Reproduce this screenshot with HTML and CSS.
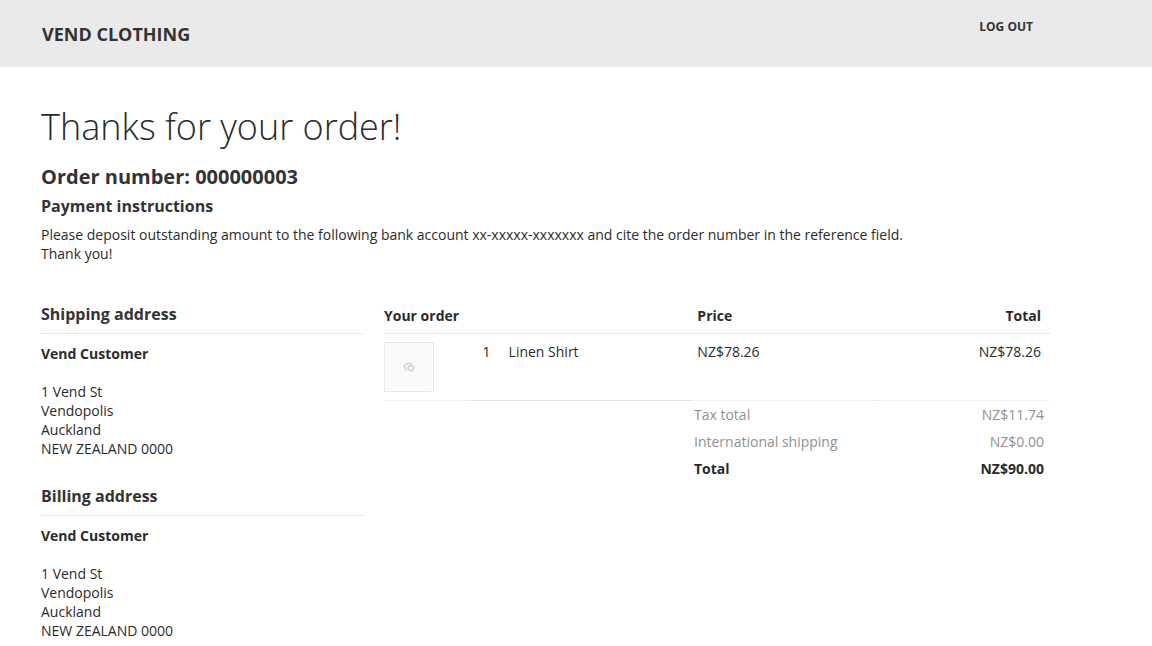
FILE: index.html
```html
<!DOCTYPE html>
<html lang="en">
<head>
<meta charset="utf-8">
<title>Vend Clothing</title>
<link rel="stylesheet" href="styles.css">
</head>
<body>
<header class="site-header">
  <div class="container header-row">
    <a class="brand" href="#">VEND CLOTHING</a>
    <a class="logout" href="#">LOG OUT</a>
  </div>
</header>
<main class="container">
  <h1 class="title">Thanks for your order!</h1>
  <h2 class="order-number">Order number: 000000003</h2>
  <h3 class="instructions-title">Payment instructions</h3>
  <p class="instructions">Please deposit outstanding amount to the following bank account xx-xxxxx-xxxxxxx and cite the order number in the reference field.<br>Thank you!</p>
  <div class="columns">
    <div class="addresses">
      <section class="address">
        <h3 class="address-title">Shipping address</h3>
        <p class="customer">Vend Customer</p>
        <address class="lines">1 Vend St<br>Vendopolis<br>Auckland<br>NEW ZEALAND 0000</address>
      </section>
      <section class="address">
        <h3 class="address-title">Billing address</h3>
        <p class="customer">Vend Customer</p>
        <address class="lines">1 Vend St<br>Vendopolis<br>Auckland<br>NEW ZEALAND 0000</address>
      </section>
    </div>
    <section class="order">
      <table class="items">
        <colgroup><col class="col-thumb"><col class="col-name"><col class="col-price"><col class="col-total"></colgroup>
        <thead>
          <tr><th colspan="2">Your order</th><th class="price">Price</th><th class="amount">Total</th></tr>
        </thead>
        <tbody>
          <tr>
            <td>
              <div class="thumb">
                <svg width="48" height="48" viewBox="0 0 48 48" fill="none" stroke-linejoin="round">
                  <path d="M0 0 48 48M48 0 0 48" stroke="#f7f7f7"/>
                  <path d="M22 27 20.500 26.500 19 23 21.500 21 25.500 20.200 26.500 22" stroke="#d2d2d2" stroke-width="1.500"/>
                  <path d="M24.500 22.800 28.800 23.300 28 27.500 25 27.500 22.500 25Z" fill="#fafafa" stroke="#d2d2d2" stroke-width="1.500"/>
                </svg>
              </div>
            </td>
            <td class="name"><span class="quantity">1</span>Linen Shirt</td>
            <td class="price">NZ$78.26</td>
            <td class="amount">NZ$78.26</td>
          </tr>
        </tbody>
      </table>
      <table class="totals">
        <tbody>
          <tr><th>Tax total</th><td>NZ$11.74</td></tr>
          <tr><th>International shipping</th><td>NZ$0.00</td></tr>
          <tr class="grand"><th>Total</th><td>NZ$90.00</td></tr>
        </tbody>
      </table>
    </section>
  </div>
</main>
</body>
</html>
```
FILE: styles.css
```css
* { box-sizing: border-box; }
body {
  margin: 0;
  background: #fff;
  color: #2b2b2b;
  font: 14px/19px "Open Sans", sans-serif;
}
h1, h2, h3, p { margin: 0; }
h2, h3 { color: #333; }
a { color: inherit; text-decoration: none; }
.container {
  max-width: 1050px;
  padding-left: 41px;
}
.site-header {
  background: #eaeaea;
  padding: 16px 0 15px;
}
.header-row {
  display: flex;
  justify-content: space-between;
  padding-left: 42px;
  padding-right: 17px;
  color: #333;
}
.brand {
  font-size: 18px;
  line-height: 36px;
  font-weight: 700;
}
.logout {
  font-size: 12px;
  line-height: 21px;
  font-weight: 700;
}
.title {
  padding-top: 32px;
  font-size: 36px;
  line-height: 56px;
  font-weight: 300;
}
.order-number {
  padding-top: 6px;
  font-size: 20px;
  line-height: 32px;
}
.instructions-title {
  font-size: 16px;
  line-height: 26px;
}
.instructions { padding-top: 6px; }
.columns {
  display: grid;
  grid-template-columns: 323fr 666fr;
  gap: 20px;
  padding-top: 38px;
}
.address { padding-bottom: 25px; }
.address-title {
  padding-bottom: 6px;
  border-bottom: 1px solid #e8e8e8;
  font-size: 16px;
  line-height: 26px;
}
.customer {
  padding: 10px 0 19px;
  font-weight: 700;
}
.lines { font-style: normal; }
.items, .totals {
  width: 100%;
  border-spacing: 0;
}
.items { table-layout: fixed; }
.col-thumb { width: 13%; }
.col-name { width: 33%; }
.col-total { width: 26%; }
.items th {
  padding: 5px 9px 8px 0;
  border-bottom: 1px solid #e8e8e8;
  text-align: left;
}
.items td {
  padding: 8px 9px 8px 0;
  border-bottom: 1px dotted #e4e4e4;
  vertical-align: top;
}
.items .name { border-bottom-style: solid; }
.items .price { padding-left: 7px; }
.items .amount { text-align: right; }
.thumb {
  width: 50px;
  height: 50px;
  border: 1px solid #e8e8e8;
  background: #fafafa;
}
.thumb svg { display: block; }
.quantity {
  display: inline-block;
  width: 38px;
  padding-left: 12px;
}
.totals {
  width: 356px;
  margin-left: auto;
  color: #919191;
}
.totals th, .totals td { padding: 4px 6px 4px 0; }
.totals th {
  text-align: left;
  font-weight: 400;
}
.totals td { text-align: right; }
.totals .grand th, .totals .grand td {
  color: #2b2b2b;
  font-weight: 700;
}
```
